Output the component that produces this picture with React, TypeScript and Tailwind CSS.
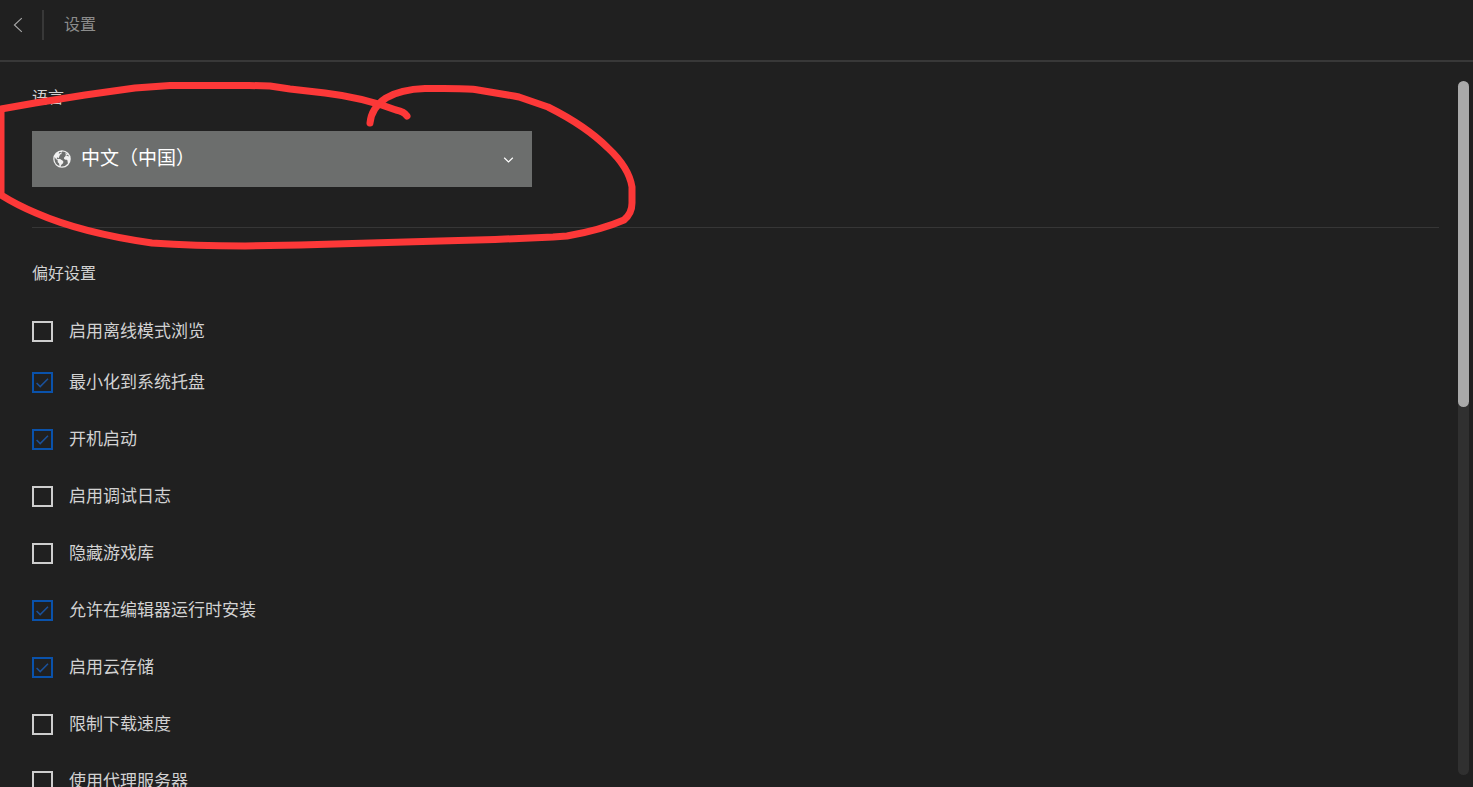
import { useState } from 'react';
import { IoEarth } from 'react-icons/io5';

interface Preference {
  id: string;
  label: string;
  checked: boolean;
}

const PREFERENCES: Preference[] = [
  { id: 'offline', label: '启用离线模式浏览', checked: false },
  { id: 'tray', label: '最小化到系统托盘', checked: true },
  { id: 'startup', label: '开机启动', checked: true },
  { id: 'debug', label: '启用调试日志', checked: false },
  { id: 'hide_library', label: '隐藏游戏库', checked: false },
  { id: 'editor_install', label: '允许在编辑器运行时安装', checked: true },
  { id: 'cloud', label: '启用云存储', checked: true },
  { id: 'throttle', label: '限制下载速度', checked: false },
  { id: 'proxy', label: '使用代理服务器', checked: false },
];

const Header = () => (
  <header className="flex h-[62px] shrink-0 items-start border-b-2 border-[#383838] pt-2.5">
    <button type="button" aria-label="返回" className="flex h-[30px] w-[42px] items-center pl-3">
      <svg width="12" height="16" viewBox="0 0 12 16" fill="none" stroke="#a8a8a8" strokeWidth="1.1">
        <path d="M9.8 1.2 2.4 8l7.4 6.8" />
      </svg>
    </button>
    <div className="h-[30px] w-0.5 bg-[#383838]"></div>
    <h1 className="ml-5 text-base leading-[26px] text-[#8c8c8c]">设置</h1>
  </header>
);

const LanguageSelect = () => {
  const [language, setLanguage] = useState('zh-CN');

  return (
    <div className="relative mt-6 w-[500px] max-w-full">
      <select
        id="language"
        value={language}
        onChange={(e) => setLanguage(e.target.value)}
        className="block h-14 w-full appearance-none bg-[#6c6e6d] pb-1 pl-[49px] text-[19px] text-white outline-none"
      >
        <option value="zh-CN">中文（中国）</option>
        <option value="en-US">English</option>
      </select>
      <IoEarth size={20} className="pointer-events-none absolute top-[18px] left-5 text-[#f0f0f0]" />
      <svg
        className="pointer-events-none absolute top-[25px] right-[18px]"
        width="11"
        height="8"
        viewBox="0 0 11 8"
        fill="none"
        stroke="#fff"
        strokeWidth="1.2"
      >
        <path d="m1.2 1.8 4.3 4.2 4.3-4.2" />
      </svg>
    </div>
  );
};

const PreferenceRow = ({ id, label, checked }: Preference) => {
  const [value, setValue] = useState(checked);

  return (
    <div className="flex h-[21px] items-start">
      <span className="relative flex">
        <input
          id={id}
          type="checkbox"
          checked={value}
          onChange={(e) => setValue(e.target.checked)}
          className="size-[21px] appearance-none border-2 border-[#cecece] checked:border-[#0a52ab]"
        />
        {value && (
          <svg
            className="pointer-events-none absolute inset-0"
            width="21"
            height="21"
            viewBox="0 0 21 21"
            fill="none"
            stroke="#1a519b"
            strokeWidth="1.5"
          >
            <path d="m4.6 11 3.6 3.6 7.8-7.8" />
          </svg>
        )}
      </span>
      <label htmlFor={id} className="pl-4 text-[17px] leading-[18px] text-[#d2d2d2]">
        {label}
      </label>
    </div>
  );
};

// freehand marker loop drawn around the language picker
const MarkerLoop = () => (
  <svg
    className="pointer-events-none absolute top-0 left-0"
    width="660"
    height="260"
    viewBox="0 0 660 260"
    fill="none"
    stroke="#fc3838"
    strokeWidth="7"
    strokeLinecap="round"
    strokeLinejoin="round"
  >
    <path d="M407 116C405 113 401 111 396 110C375 102 350 96 325 93L290 89L270 86L249 85.500H170L135 88L85 95L35 103L1 109V195C12 202 24 208 36 213C68 227 110 237 152 243C180 245 215 246 245 246L300 245L440 241L495 239.500L553 237L567 236C590 232 608 227 624 220C630 215 632 209 632 203V187C630 174 622 161 608 148C594 134 572 119 548 107L519 97L514 96L475 89.500C465 88 445 88.500 425 88.500C410 89 396 92 386 98C377 104 371 112 370 123" />
  </svg>
);

const App = () => {
  return (
    <div className="relative flex h-screen flex-col overflow-hidden bg-[#202020] font-['Noto_Sans_CJK_SC',sans-serif]">
      <Header />
      <div className="flex min-h-0 flex-1">
        <main className="min-w-0 flex-1 overflow-hidden pt-[23px] pr-[19px] pl-8">
          <section className="border-b border-[#363636] pb-10">
            <label htmlFor="language" className="block text-base leading-[22px] text-[#d2d2d2]">
              语言
            </label>
            <LanguageSelect />
          </section>
          <section className="pt-[33px]">
            <h2 className="text-base leading-[22px] text-[#d2d2d2]">偏好设置</h2>
            <div className="mt-[38px] flex flex-col gap-[30px]">
              <PreferenceRow {...PREFERENCES[0]} />
              <div className="flex flex-col gap-9">
                {PREFERENCES.slice(1).map((item) => (
                  <PreferenceRow key={item.id} {...item} />
                ))}
              </div>
            </div>
          </section>
        </main>
        <div className="flex w-[15px] shrink-0 pt-[19px] pr-1 pb-3">
          <div className="w-full rounded-full bg-[#303030]">
            <div className="h-[47%] w-full rounded-full bg-[#a9a9a9]"></div>
          </div>
        </div>
      </div>
      <MarkerLoop />
    </div>
  );
};

export default App;
